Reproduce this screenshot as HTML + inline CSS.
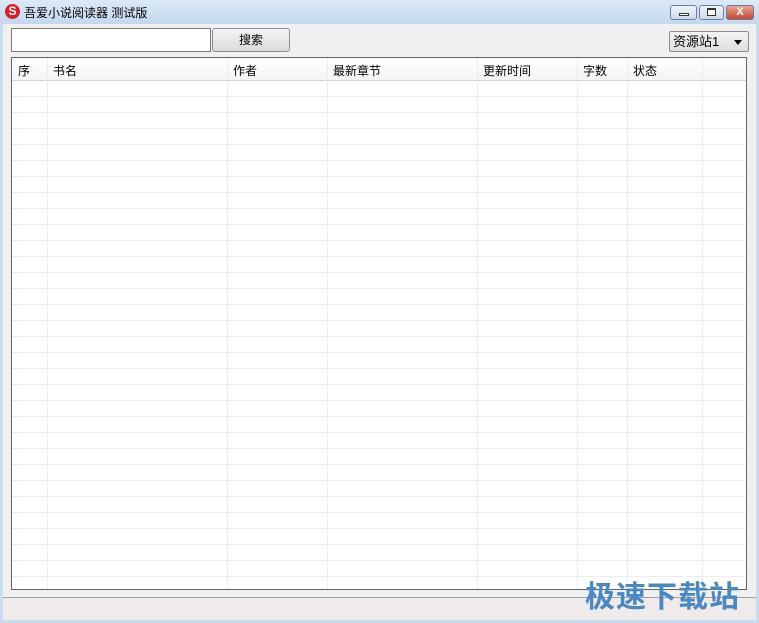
<!DOCTYPE html>
<html><head><meta charset="utf-8"><style>
*{margin:0;padding:0;box-sizing:border-box}
body{width:759px;height:623px;overflow:hidden;background:#c7dcf0;font-family:"Liberation Sans","Noto Sans CJK SC",sans-serif;font-size:12px;color:#000;position:relative}
.title{position:absolute;left:0;top:0;width:759px;height:24px;background:linear-gradient(#dce9f6,#c4d8ee)}
.title span{position:absolute;left:24px;top:4px;font-size:12px}
.logo{position:absolute;left:5px;top:4px;width:15px;height:15px;border-radius:50%;background:#d8202a;color:#fff;font-size:12px;font-weight:bold;line-height:15px;text-align:center}
.btn{position:absolute;top:5px;height:15px;border:1px solid #6d7f96;border-radius:3px;background:linear-gradient(#eef3f9,#cfdbea)}
.body{position:absolute;left:3px;top:24px;width:753px;height:596px;background:#f0f0f0}
.input{position:absolute;left:11px;top:28px;width:200px;height:24px;border:1px solid #7a7a7a;background:#fff}
.sbtn{position:absolute;left:212px;top:28px;width:78px;height:24px;border:1px solid #8e8e8e;border-radius:3px;background:linear-gradient(#f4f4f4,#dcdcdc);text-align:center;line-height:22px}
.combo{position:absolute;left:669px;top:31px;width:80px;height:21px;border:1px solid #8e8e8e;border-radius:2px;background:linear-gradient(#f4f4f4,#dedede);padding-left:3px;line-height:19px;font-size:13px}
.combo i{position:absolute;right:6px;top:8px;border-left:4px solid transparent;border-right:4px solid transparent;border-top:5px solid #000}
.table{position:absolute;left:11px;top:57px;width:736px;height:533px;border:1px solid #646464;background:#fff;overflow:hidden}
.hdr{position:absolute;left:0;top:0;width:734px;height:23px;background:linear-gradient(#fff,#f3f4f6);border-bottom:1px solid #d5d5d5}
.rows{position:absolute;left:0;top:23px;width:734px;height:510px;background-image:repeating-linear-gradient(to bottom,transparent 0,transparent 15px,#ececec 15px,#ececec 16px)}
.col{position:absolute;top:0;height:533px;width:1px;background:#ececec}
.h{position:absolute;top:4px;font-size:12px}
.status{position:absolute;left:3px;top:597px;width:753px;height:23px;border-top:1px solid #a0a0a0;background:#efebeb}
.wm{position:absolute;left:585px;top:572px;font-size:30px;font-weight:bold;color:#4a88c4;letter-spacing:1px}
</style></head><body>
<div class="title"><div class="logo">S</div><span>吾爱小说阅读器 测试版</span></div>
<div class="btn" style="left:670px;width:27px"><div style="position:absolute;left:8px;top:7px;width:10px;height:3px;border:1px solid #333;background:#fff"></div></div>
<div class="btn" style="left:699px;width:25px"><div style="position:absolute;left:7px;top:2px;width:9px;height:8px;border:1px solid #333;border-top-width:2px;background:#fff"></div></div>
<div class="btn" style="left:726px;width:28px;background:linear-gradient(#e9a596,#c8462f);color:#fff;text-align:center;font-size:11px;line-height:13px;font-weight:bold">X</div>
<div class="body"></div>
<div class="input"></div>
<div class="sbtn">搜索</div>
<div class="combo">资源站1<i></i></div>
<div class="table">
<div class="rows"></div>
<div class="hdr"></div>
<div class="col" style="left:35px"></div>
<div class="col" style="left:215px"></div>
<div class="col" style="left:315px"></div>
<div class="col" style="left:465px"></div>
<div class="col" style="left:565px"></div>
<div class="col" style="left:615px"></div>
<div class="col" style="left:690px"></div>
<div class="h" style="left:6px">序</div>
<div class="h" style="left:41px">书名</div>
<div class="h" style="left:221px">作者</div>
<div class="h" style="left:321px">最新章节</div>
<div class="h" style="left:471px">更新时间</div>
<div class="h" style="left:571px">字数</div>
<div class="h" style="left:621px">状态</div>
</div>
<div class="status"></div>
<div class="wm">极速下载站</div>
</body></html>
